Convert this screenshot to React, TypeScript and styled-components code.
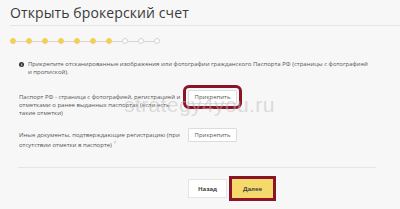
import React from "react";
import styled, { createGlobalStyle } from "styled-components";

const Global = createGlobalStyle`
  html, body { margin: 0; padding: 0; background: #f7f7f7; }
  body { font-family: "Open Sans", "Liberation Sans", sans-serif; color: #444; }
  #root { width: 400px; height: 209px; overflow: hidden; }
`;

const Page = styled.div`
  position: relative;
  width: 400px;
  height: 209px;
  background: #f7f7f7;
  display: flex;
  flex-direction: column;
`;

const Header = styled.div`
  margin-left: 10px;
  height: 25px;
  border-bottom: 1px solid #e6e6e6;
  display: flex;
  align-items: center;
`;

const Title = styled.h1`
  margin: 0;
  font-size: 14px;
  font-weight: 400;
  color: #3a3a3a;
  line-height: 20px;
  letter-spacing: 0.1px;
`;

const Stepper = styled.div`
  margin: 12px 0 0 10px;
  display: flex;
  align-items: center;
`;

const Dot = styled.span<{ $done: boolean }>`
  width: 6px;
  height: 6px;
  border-radius: 50%;
  box-sizing: border-box;
  background: ${(p) => (p.$done ? "#f5cf55" : "#ffffff")};
  border: 1px solid ${(p) => (p.$done ? "#f5cf55" : "#d2d2d2")};
`;

const Link = styled.span`
  width: 10px;
  height: 1px;
  background: #d4d4d4;
`;

const Info = styled.div`
  margin: 16px 0 0 19px;
  display: flex;
  align-items: flex-start;
  gap: 4px;
  width: 350px;
`;

const InfoIcon = styled.span`
  flex: none;
  width: 5px;
  height: 5px;
  margin-top: 1.5px;
  border-radius: 50%;
  background: #333;
  color: #fff;
  font-size: 4px;
  line-height: 5px;
  text-align: center;
  font-weight: 700;
`;

const SmallText = styled.p`
  margin: 0;
  font-size: 6px;
  line-height: 8px;
  color: #555;
`;

const Rows = styled.div`
  margin: 14px 0 0 19px;
  display: flex;
  flex-direction: column;
  gap: 11px;
`;

const Row = styled.div`
  display: flex;
  align-items: flex-start;
  gap: 7px;
`;

const RowLabel = styled(SmallText)`
  width: 162px;
  padding-top: 3px;
`;

const Help = styled.sup`
  font-size: 4px;
  vertical-align: 3px;
  margin-left: 2px;
  color: #777;
`;

const AttachButton = styled.button<{ $marked?: boolean }>`
  flex: none;
  width: 49px;
  height: 14px;
  padding: 0;
  background: #fff;
  border: 1px solid #dcdcdc;
  border-radius: 1px;
  font-family: "Open Sans", "Liberation Sans", sans-serif;
  font-size: 6px;
  color: #555;
  outline: ${(p) => (p.$marked ? "3px solid #8c1428" : "none")};
  outline-offset: 2px;
`;

const Divider = styled.div`
  margin: 18px 24px 0 18px;
  height: 1px;
  background: #e6e6e6;
`;

const Footer = styled.div`
  margin: 11px 0 0 188px;
  display: flex;
  gap: 5px;
`;

const NavButton = styled.button<{ $primary?: boolean }>`
  height: 19px;
  width: ${(p) => (p.$primary ? "41px" : "39px")};
  padding: 0;
  box-sizing: border-box;
  font-family: "Open Sans", "Liberation Sans", sans-serif;
  font-size: 6px;
  font-weight: 700;
  color: #444;
  background: ${(p) => (p.$primary ? "#f5d96b" : "#fff")};
  border: ${(p) => (p.$primary ? "none" : "1px solid #e4e4e4")};
  outline: ${(p) => (p.$primary ? "3px solid #8c1428" : "none")};
  outline-offset: 0;
`;

const Watermark = styled.div`
  position: absolute;
  left: 124px;
  top: 93px;
  font-family: "Liberation Sans", Arial, sans-serif;
  font-size: 21px;
  letter-spacing: 0.4px;
  color: rgba(190, 190, 190, 0.5);
  pointer-events: none;
  white-space: nowrap;
`;

const steps = [1, 1, 1, 1, 1, 1, 1, 0, 0, 0];

export default function App() {
  return (
    <Page>
      <Global />
      <Header>
        <Title>Открыть брокерский счет</Title>
      </Header>
      <Stepper>
        {steps.map((s, i) => (
          <React.Fragment key={i}>
            {i > 0 && <Link />}
            <Dot $done={s === 1} />
          </React.Fragment>
        ))}
      </Stepper>
      <Info>
        <InfoIcon>i</InfoIcon>
        <SmallText>
          Прикрепите отсканированные изображения или фотографии гражданского Паспорта РФ (страницы с фотографией
          и пропиской).
        </SmallText>
      </Info>
      <Rows>
        <Row>
          <RowLabel>
            Паспорт РФ - страница с фотографией, регистрацией и отметками о ранее выданных паспортах (если есть
            такие отметки)
          </RowLabel>
          <AttachButton $marked>Прикрепить</AttachButton>
        </Row>
        <Row>
          <RowLabel>
            Иные документы, подтверждающие регистрацию (при отсутствии отметки в паспорте)
            <Help>?</Help>
          </RowLabel>
          <AttachButton>Прикрепить</AttachButton>
        </Row>
      </Rows>
      <Divider />
      <Footer>
        <NavButton>Назад</NavButton>
        <NavButton $primary>Далее</NavButton>
      </Footer>
      <Watermark>strategy4you.ru</Watermark>
    </Page>
  );
}
